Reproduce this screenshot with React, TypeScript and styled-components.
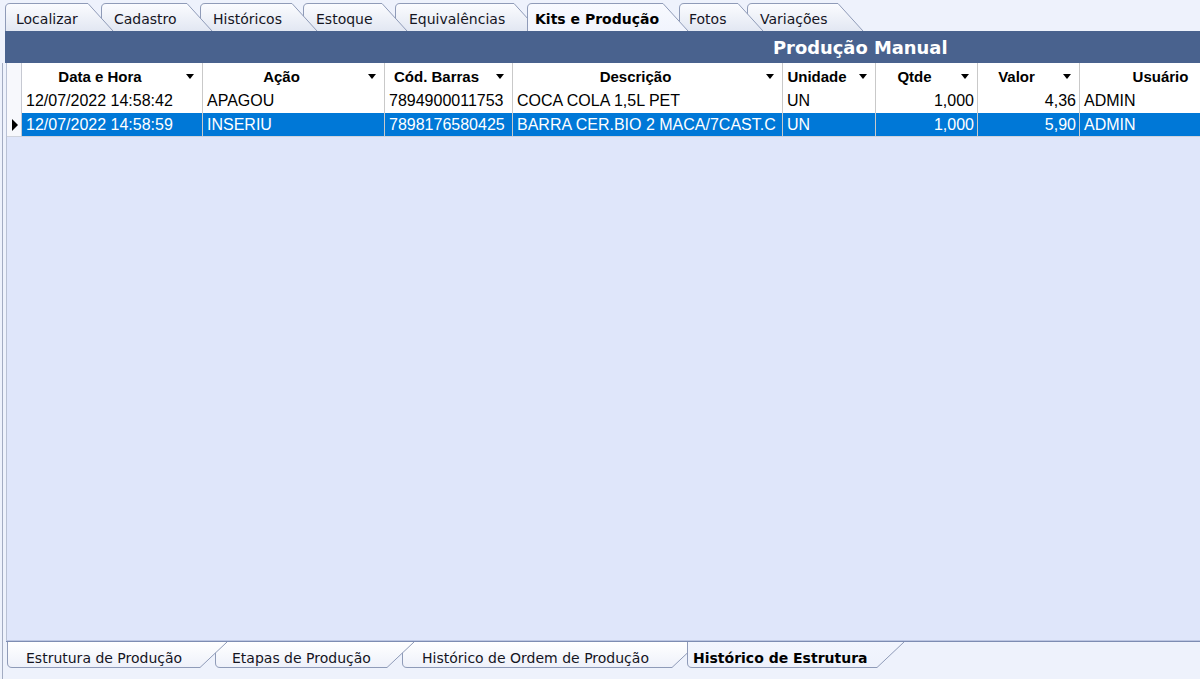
import React from "react";
import styled, { createGlobalStyle } from "styled-components";

const GlobalStyle = createGlobalStyle`
  html, body {
    margin: 0;
    padding: 0;
    background: #eef2fc;
    overflow: hidden;
  }
  * {
    box-sizing: border-box;
  }
`;

const Screen = styled.div`
  width: 1200px;
  height: 679px;
  display: flex;
  flex-direction: column;
  background: #eef2fc;
  font-family: "DejaVu Sans", Verdana, sans-serif;
`;

/* ---------- tabs ---------- */

const TabStrip = styled.div<{ $top?: boolean }>`
  display: flex;
  align-items: flex-start;
  flex: none;
  height: ${(p) => (p.$top ? "31px" : "37px")};
  padding-top: ${(p) => (p.$top ? "3px" : "0")};
  padding-left: ${(p) => (p.$top ? "5px" : "1px")};
`;

const TabItem = styled.div<{ $step: number; $z: number; $pad: number; $h: number; $top?: boolean }>`
  position: relative;
  flex: none;
  width: ${(p) => p.$step}px;
  height: ${(p) => p.$h}px;
  z-index: ${(p) => p.$z};
  padding-left: ${(p) => p.$pad}px;
  padding-top: ${(p) => (p.$top ? "4px" : "5px")};
  line-height: ${(p) => (p.$top ? "23px" : "21px")};
`;

const TabShape = styled.svg`
  position: absolute;
  left: 0;
  top: 0;
  overflow: visible;
`;

const TabLabel = styled.span<{ $active?: boolean }>`
  position: relative;
  white-space: nowrap;
  font-size: 14px;
  font-weight: ${(p) => (p.$active ? 700 : 400)};
  color: ${(p) => (p.$active ? "#000" : "#15151f")};
`;

type TabDef = { label: string; body: number; step: number; pad: number; active?: boolean };

const topTabs: TabDef[] = [
  { label: "Localizar", body: 83, step: 96, pad: 11 },
  { label: "Cadastro", body: 86, step: 99, pad: 13 },
  { label: "Históricos", body: 92, step: 103, pad: 13 },
  { label: "Estoque", body: 79, step: 92, pad: 13 },
  { label: "Equivalências", body: 119, step: 132, pad: 14 },
  { label: "Kits e Produção", body: 136, step: 152, pad: 8, active: true },
  { label: "Fotos", body: 59, step: 68, pad: 10 },
  { label: "Variações", body: 91, step: 120, pad: 13 },
];

const bottomTabs: TabDef[] = [
  { label: "Estrutura de Produção", body: 193, step: 208, pad: 19 },
  { label: "Etapas de Produção", body: 172, step: 187, pad: 17 },
  { label: "Histórico de Ordem de Produção", body: 270, step: 285, pad: 20 },
  { label: "Histórico de Estrutura", body: 190, step: 230, pad: 6, active: true },
];

function TabOutline({ id, body, h, slant, top, active }: { id: string; body: number; h: number; slant: number; top: boolean; active?: boolean }) {
  const r = 5;
  const outline = top
    ? `M0.5 ${h} V${r} Q0.5 0.5 ${r} 0.5 H${body} L${body + slant} ${h}`
    : `M0.5 0 V${h - r} Q0.5 ${h - 0.5} ${r} ${h - 0.5} H${body} L${body + slant} 0`;
  const from = top ? (active ? "#f8faff" : "#fbfcff") : active ? "#f2f5fe" : "#ffffff";
  const to = top ? (active ? "#f1f4fd" : "#e2e7f2") : active ? "#eef2fc" : "#eef1fa";
  return (
    <TabShape width={body + slant + 1} height={h}>
      <defs>
        <linearGradient id={id} x1="0" y1="0" x2="0" y2="1">
          <stop offset="0" stopColor={from} />
          <stop offset="1" stopColor={to} />
        </linearGradient>
      </defs>
      <path d={outline + " Z"} fill={`url(#${id})`} stroke="none" />
      <path d={outline} fill="none" stroke="#8f9bb8" strokeWidth="1" />
    </TabShape>
  );
}

function Tabs({ tabs, top }: { tabs: TabDef[]; top: boolean }) {
  const h = top ? 28 : 26;
  const slant = top ? 25 : 27;
  return (
    <TabStrip $top={top}>
      {tabs.map((t, i) => (
        <TabItem
          key={t.label}
          $step={t.step}
          $pad={t.pad}
          $h={h}
          $top={top}
          $z={t.active ? 50 : tabs.length - i}
        >
          <TabOutline id={`${top ? "t" : "b"}${i}`} body={t.body} h={h} slant={slant} top={top} active={t.active} />
          <TabLabel $active={t.active}>{t.label}</TabLabel>
        </TabItem>
      ))}
    </TabStrip>
  );
}

/* ---------- title bar ---------- */

const TitleBar = styled.div`
  flex: none;
  height: 32px;
  margin-left: 5px;
  background: #49628e;
  display: flex;
  align-items: center;
  padding-left: 768px;
  color: #ffffff;
  font-weight: 700;
  font-size: 17.9px;
  white-space: nowrap;
`;

/* ---------- grid ---------- */

const Body = styled.div`
  flex: 1;
  min-height: 0;
  display: flex;
  flex-direction: column;
  margin-left: 2px;
  border-left: 1px solid #a3acc2;
  padding-left: 3px;
`;

const GridArea = styled.div`
  flex: 1;
  min-height: 0;
  overflow: hidden;
  background: #dfe6fa;
  border-left: 1px solid #b9c1d4;
`;

const Row = styled.div<{ $header?: boolean; $selected?: boolean }>`
  display: flex;
  width: max-content;
  height: ${(p) => (p.$header ? "26px" : "24px")};
  background: ${(p) => (p.$selected ? "#0078d7" : "#ffffff")};
  color: ${(p) => (p.$selected ? "#ffffff" : "#000000")};
  border-bottom: ${(p) => (p.$selected ? "1px solid #cfd3dc" : "none")};
  font-family: "Liberation Sans", Arial, sans-serif;
`;

const Indicator = styled.div`
  flex: none;
  width: 15px;
  background: #f7f8fc;
  border-right: 1px solid #c6c9d2;
  display: flex;
  align-items: center;
  justify-content: center;
`;

const Pointer = styled.span`
  width: 0;
  height: 0;
  border-top: 6px solid transparent;
  border-bottom: 6px solid transparent;
  border-left: 6px solid #000;
  margin-left: 1px;
`;

const HeadCell = styled.div<{ $w: number }>`
  flex: none;
  width: ${(p) => p.$w}px;
  border-right: 1px solid #c9c9c9;
  display: flex;
  align-items: center;
  font-size: 15px;
  font-weight: 700;
  white-space: nowrap;
  overflow: hidden;
`;

const HeadLabel = styled.span`
  flex: 1;
  text-align: center;
`;

const ArrowBox = styled.span`
  flex: none;
  width: 24px;
  display: flex;
  justify-content: center;
`;

const DownArrow = styled.span`
  width: 0;
  height: 0;
  border-left: 4px solid transparent;
  border-right: 4px solid transparent;
  border-top: 5px solid #000;
`;

const Cell = styled.div<{ $w: number; $right?: boolean }>`
  flex: none;
  width: ${(p) => p.$w}px;
  border-right: 1px solid #c9c9c9;
  padding: 0 3px 0 4px;
  text-align: ${(p) => (p.$right ? "right" : "left")};
  font-size: 16px;
  line-height: 24px;
  white-space: nowrap;
  overflow: hidden;
`;

type Col = { title: string; width: number; right?: boolean; arrow?: boolean };

const cols: Col[] = [
  { title: "Data e Hora", width: 181, arrow: true },
  { title: "Ação", width: 182, arrow: true },
  { title: "Cód. Barras", width: 128, arrow: true },
  { title: "Descrição", width: 270, arrow: true },
  { title: "Unidade", width: 93, arrow: true },
  { title: "Qtde", width: 102, right: true, arrow: true },
  { title: "Valor", width: 102, right: true, arrow: true },
  { title: "Usuário", width: 162 },
];

const rows = [
  ["12/07/2022 14:58:42", "APAGOU", "7894900011753", "COCA COLA 1,5L PET", "UN", "1,000", "4,36", "ADMIN"],
  ["12/07/2022 14:58:59", "INSERIU", "7898176580425", "BARRA CER.BIO 2 MACA/7CAST.C", "UN", "1,000", "5,90", "ADMIN"],
];

function Grid() {
  return (
    <GridArea>
      <Row $header>
        <Indicator />
        {cols.map((c) => (
          <HeadCell key={c.title} $w={c.width}>
            <HeadLabel>{c.title}</HeadLabel>
            {c.arrow && (
              <ArrowBox>
                <DownArrow />
              </ArrowBox>
            )}
          </HeadCell>
        ))}
      </Row>
      {rows.map((r, i) => {
        const selected = i === 1;
        return (
          <Row key={i} $selected={selected}>
            <Indicator>{selected && <Pointer />}</Indicator>
            {r.map((v, j) => (
              <Cell key={j} $w={cols[j].width} $right={cols[j].right}>
                {v}
              </Cell>
            ))}
          </Row>
        );
      })}
    </GridArea>
  );
}

const BottomBar = styled.div`
  flex: none;
  border-top: 1px solid #7d8cb2;
  box-shadow: 0 -1px 0 #bcc6e2;
`;

export default function App() {
  return (
    <>
      <GlobalStyle />
      <Screen>
        <Tabs tabs={topTabs} top />
        <TitleBar>Produção Manual</TitleBar>
        <Body>
          <Grid />
          <BottomBar>
            <Tabs tabs={bottomTabs} top={false} />
          </BottomBar>
        </Body>
      </Screen>
    </>
  );
}
